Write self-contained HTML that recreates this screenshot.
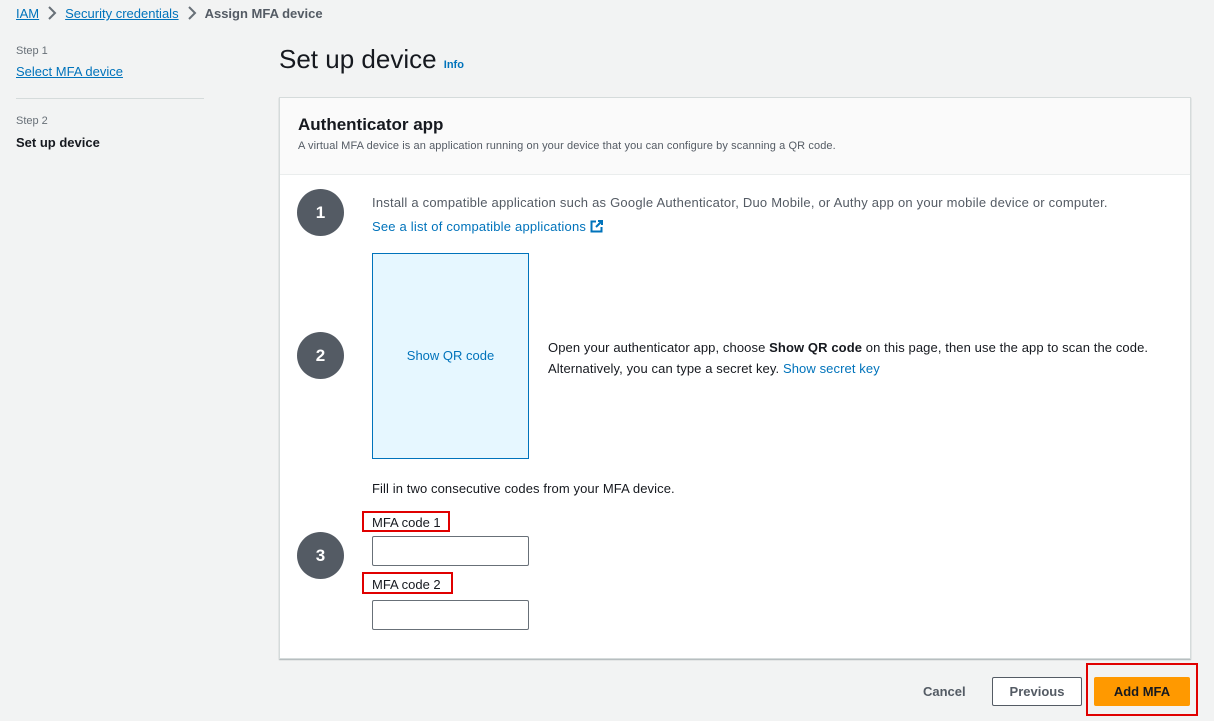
<!DOCTYPE html>
<html><head><meta charset="utf-8"><style>
*{box-sizing:border-box;margin:0;padding:0}
body{width:1214px;height:721px;background:#f2f3f3;font-family:"Liberation Sans",Arial,sans-serif;color:#16191f;position:relative;overflow:hidden;font-size:13px}
.a{position:absolute;white-space:nowrap}
.lnk{color:#0073bb}
.u{text-decoration:underline}
.c{position:absolute;width:47px;height:47px;border-radius:50%;background:#545b64;color:#fff;font-weight:bold;font-size:17px;text-align:center;line-height:47px}
.in{position:absolute;width:157px;height:30px;border:1px solid #687078;background:#fff;border-radius:2px}
.red{position:absolute;border:2px solid #e00000}
.chev{vertical-align:-2px;margin:0 8px}
</style></head><body>
<div class="a" style="left:16px;top:6px;font-size:13px"><span class="lnk u">IAM</span><svg class="chev" width="10" height="14" viewBox="0 0 10 14"><path d="M2 1l6 6-6 6" fill="none" stroke="#687078" stroke-width="2"/></svg><span class="lnk u">Security credentials</span><svg class="chev" width="10" height="14" viewBox="0 0 10 14"><path d="M2 1l6 6-6 6" fill="none" stroke="#687078" stroke-width="2"/></svg><b style="color:#545b64">Assign MFA device</b></div>
<div class="a" style="left:16px;top:45px;font-size:11px;color:#687078">Step 1</div>
<div class="a lnk u" style="left:16px;top:64px">Select MFA device</div>
<div class="a" style="left:16px;top:98px;width:188px;border-top:1px solid #d5dbdb"></div>
<div class="a" style="left:16px;top:115px;font-size:11px;color:#687078">Step 2</div>
<div class="a" style="left:16px;top:135px;font-weight:bold">Set up device</div>
<div class="a" style="left:279px;top:44px;font-size:26px">Set up device <span style="font-size:11px;font-weight:bold;color:#0073bb">Info</span></div>
<div class="a" style="left:279px;top:97px;width:912px;height:562px;background:#fff;border:1px solid #d5dbdb;box-shadow:0 1px 1px rgba(0,28,36,.3)">
 <div style="height:77px;background:#fafafa;border-bottom:1px solid #eaeded"></div>
</div>
<div class="a" style="left:298px;top:115px;font-size:17px;font-weight:bold">Authenticator app</div>
<div class="a" style="left:298px;top:140px;font-size:11px;color:#545b64;letter-spacing:0.1px">A virtual MFA device is an application running on your device that you can configure by scanning a QR code.</div>
<div class="c" style="left:297px;top:189px">1</div>
<div class="c" style="left:297px;top:332px">2</div>
<div class="c" style="left:297px;top:532px">3</div>
<div class="a" style="left:372px;top:195px;color:#545b64;letter-spacing:0.22px">Install a compatible application such as Google Authenticator, Duo Mobile, or Authy app on your mobile device or computer.</div>
<div class="a lnk" style="left:372px;top:219px;letter-spacing:0.2px">See a list of compatible applications <svg width="13" height="13" viewBox="0 0 13 13" style="vertical-align:-2px"><path d="M6 1.5H1.5v10h10V7" fill="none" stroke="#0073bb" stroke-width="2"/><path d="M8 1h4v4M12 1L6 7" fill="none" stroke="#0073bb" stroke-width="2"/></svg></div>
<div class="a" style="left:372px;top:253px;width:157px;height:206px;background:#e6f7ff;border:1px solid #0073bb;color:#0073bb;text-align:center;line-height:204px">Show QR code</div>
<div class="a" style="left:548px;top:337px;color:#16191f;line-height:21px;letter-spacing:0.1px">Open your authenticator app, choose <b>Show QR code</b> on this page, then use the app to scan the code.<br>Alternatively, you can type a secret key. <span class="lnk">Show secret key</span></div>
<div class="a" style="left:372px;top:481px;letter-spacing:0.1px">Fill in two consecutive codes from your MFA device.</div>
<div class="a" style="left:372px;top:515px">MFA code 1</div>
<div class="red" style="left:362px;top:511px;width:88px;height:21px"></div>
<div class="in" style="left:372px;top:536px"></div>
<div class="a" style="left:372px;top:577px">MFA code 2</div>
<div class="red" style="left:362px;top:572px;width:91px;height:22px"></div>
<div class="in" style="left:372px;top:600px"></div>
<div class="a" style="left:923px;top:684px;font-weight:bold;color:#545b64">Cancel</div>
<div class="a" style="left:992px;top:677px;width:90px;height:29px;border:1px solid #545b64;background:#fff;border-radius:2px;text-align:center;line-height:27px;font-weight:bold;color:#545b64">Previous</div>
<div class="a" style="left:1094px;top:677px;width:96px;height:29px;background:#ff9900;border-radius:2px;text-align:center;line-height:29px;font-weight:bold;color:#16191f">Add MFA</div>
<div class="red" style="left:1086px;top:663px;width:112px;height:53px;border-width:2px"></div>
</body></html>
